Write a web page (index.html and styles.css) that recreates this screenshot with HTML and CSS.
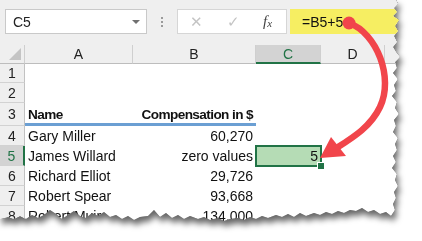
FILE: index.html
```html
<!DOCTYPE html>
<html lang="en">
<head>
<meta charset="UTF-8">
<title>Excel — zero values</title>
<link rel="stylesheet" href="styles.css">
</head>
<body>
<div class="scene">
  <div class="paper-wrap">
    <div class="paper">

      <!-- FORMULA BAR -->
      <div class="bar">
        <div class="namebox">
          <span>C5</span>
          <span class="drop"></span>
        </div>
        <div class="grip"><i></i><i></i><i></i></div>
        <div class="fbtns">
          <span class="x">✕</span>
          <span class="ok">✓</span>
          <span class="fx">f<sub>x</sub></span>
        </div>
        <div class="formula">=B5+5</div>
      </div>

      <!-- SHEET -->
      <div class="sheet">
        <div class="hd corner"><span class="tri"></span></div>
        <div class="hd col">A</div>
        <div class="hd col">B</div>
        <div class="hd col on">C</div>
        <div class="hd col">D</div>
        <div class="hd col last"></div>

        <div class="rh">1</div><div class="c"></div><div class="c"></div><div class="c"></div><div class="c"></div><div class="c"></div>
        <div class="rh">2</div><div class="c"></div><div class="c"></div><div class="c"></div><div class="c"></div><div class="c"></div>

        <div class="rh r3">3</div>
        <div class="c th">Name</div>
        <div class="c th num">Compensation in $</div>
        <div class="c"></div><div class="c"></div><div class="c"></div>

        <div class="rh">4</div><div class="c">Gary Miller</div><div class="c num">60,270</div><div class="c"></div><div class="c"></div><div class="c"></div>
        <div class="rh on">5</div><div class="c">James Willard</div><div class="c num">zero values</div><div class="c num active">5</div><div class="c"></div><div class="c"></div>
        <div class="rh">6</div><div class="c">Richard Elliot</div><div class="c num">29,726</div><div class="c"></div><div class="c"></div><div class="c"></div>
        <div class="rh">7</div><div class="c">Robert Spear</div><div class="c num">93,668</div><div class="c"></div><div class="c"></div><div class="c"></div>
        <div class="rh">8</div><div class="c">Robert Muir</div><div class="c num">134,000</div><div class="c"></div><div class="c"></div><div class="c"></div>
      </div>

    </div>
  </div>

  <!-- callout arrow from formula to cell -->
  <svg class="arrow" width="422" height="241" viewBox="0 0 422 241">
    <circle cx="349" cy="23" r="6.5" fill="#f1454b"/>
    <path d="M349 23 C 377 33 394 78 380 107 C 371 126 354 137 338 147" fill="none" stroke="#f1454b" stroke-width="6.5" stroke-linecap="round"/>
    <polygon points="320,158 331,137 346,156" fill="#f1454b"/>
  </svg>
</div>
</body>
</html>
```

FILE: styles.css
```css
:root { --band:#efefef; --line:#c9c9c9; --green:#217346; --red:#f1454b; }
* { box-sizing:border-box; margin:0; padding:0; }
body {
  background:white; width:422px; height:241px; overflow:hidden;
  font-family:"Liberation Sans",Arial,sans-serif; color:#111;
}
.scene { position:relative; width:422px; height:241px; }

/* torn paper */
.paper-wrap {
  width:404px; height:228px;
  filter:drop-shadow(0.7px 0.7px 0 #111) drop-shadow(2px 5px 3px rgba(0,0,0,0.6));
}
.paper {
  width:404px; height:228px; background:white; overflow:hidden;
  clip-path:polygon(0 0,396px 0,398px 4px,394px 8px,397px 12px,393px 16px,399px 20px,395px 26px,398px 31px,394px 36px,397px 42px,393px 47px,396px 52px,400px 57px,395px 62px,397px 68px,393px 73px,398px 79px,394px 85px,396px 91px,392px 96px,397px 102px,395px 108px,399px 114px,394px 120px,396px 126px,393px 132px,398px 138px,395px 144px,397px 150px,393px 156px,396px 162px,392px 168px,397px 174px,395px 180px,398px 186px,394px 192px,396px 198px,393px 204px,395px 210px,391px 216px,386px 212px,380px 214px,374px 210px,368px 212px,362px 208px,356px 211px,350px 210px,344px 213px,338px 211px,332px 214px,326px 212px,320px 215px,314px 213px,306px 216px,300px 213px,294px 217px,288px 214px,282px 217px,276px 215px,268px 218px,262px 216px,256px 219px,250px 217px,244px 220px,238px 218px,230px 219px,224px 221px,218px 218px,210px 220px,204px 217px,198px 219px,190px 216px,184px 219px,178px 215px,172px 218px,166px 213px,160px 217px,154px 210px,148px 216px,140px 217px,134px 220px,128px 216px,122px 219px,116px 215px,110px 217px,104px 212px,98px 216px,92px 213px,86px 218px,80px 216px,74px 211px,68px 215px,62px 219px,56px 214px,50px 210px,44px 215px,38px 218px,32px 215px,26px 219px,20px 216px,14px 219px,8px 217px,0 219px);
}

/* formula bar */
.bar {
  background:var(--band); height:45px; display:flex; align-items:flex-start;
  padding:9px 0 0 5px;
}
.namebox {
  width:142px; height:25px; background:white; border:1px solid var(--line);
  display:flex; align-items:center; justify-content:space-between;
  padding:0 6px 0 7px; font-size:14px; color:#222;
}
.drop { width:0; height:0; border-left:4px solid transparent; border-right:4px solid transparent; border-top:4px solid #707070; }
.grip { width:30px; height:25px; display:flex; flex-direction:column; align-items:center; justify-content:center; gap:2px; }
.grip i { width:2px; height:2px; background:#9a9a9a; display:block; }
.fbtns {
  width:110px; height:25px; background:white; border:1px solid #d6d6d6;
  display:flex; align-items:center; padding-left:12px; font-size:15px;
}
.fbtns .x { color:#c4c4c4; width:37px; }
.fbtns .ok { color:#c4c4c4; width:36px; }
.fbtns .fx { font-family:"Liberation Serif",serif; font-style:italic; color:#444; font-size:15px; }
.fbtns .fx sub { font-size:11px; vertical-align:-1px; }
.formula {
  flex:1; height:25px; margin-left:3px; background:#f6ee62;
  display:flex; align-items:center; padding-left:12px; font-size:14px; color:#111;
}

/* sheet grid */
.sheet {
  display:grid;
  grid-template-columns:25px 108px 123px 65px 64px 1fr;
  grid-template-rows:19px 19px 20px 23px 20px 20px 20px 20px 20px;
}
.hd {
  background:var(--band); border-bottom:1px solid #bdbdbd;
  display:flex; align-items:center; justify-content:center; font-size:14px; color:#222;
}
.col { border-right:1px solid #cfcfcf; }
.col.last { border-right:none; }
.col.on { background:#d3d3d3; color:var(--green); border-bottom:2px solid var(--green); }
.corner { border-right:1px solid #cfcfcf; position:relative; }
.tri {
  position:absolute; right:3px; bottom:3px; width:0; height:0;
  border-left:12px solid transparent; border-bottom:12px solid #c4c4c4;
}
.rh {
  background:var(--band); border-bottom:1px solid #d2d2d2; border-right:1px solid #c2c2c2;
  display:flex; align-items:center; justify-content:center; font-size:14px; color:#222;
}
.rh.on { background:#d3d3d3; color:var(--green); border-right:2px solid var(--green); }
.c {
  display:flex; align-items:center; padding:0 3px; font-size:14px; white-space:nowrap;
  color:#111;
}
.num { justify-content:flex-end; }
.th { font-weight:bold; font-size:13.6px; letter-spacing:-0.6px; border-bottom:3px solid #6b9fd3; padding-top:2px; }
.active { position:relative; background:#b5dcb5; }
.active::after {
  content:""; position:absolute; inset:-1px; border:2px solid var(--green);
}
.active::before {
  content:""; position:absolute; right:-4px; bottom:-4px; width:6px; height:6px;
  background:var(--green); border:1px solid white; z-index:1;
}

.arrow { position:absolute; left:0; top:0; pointer-events:none; }
```
